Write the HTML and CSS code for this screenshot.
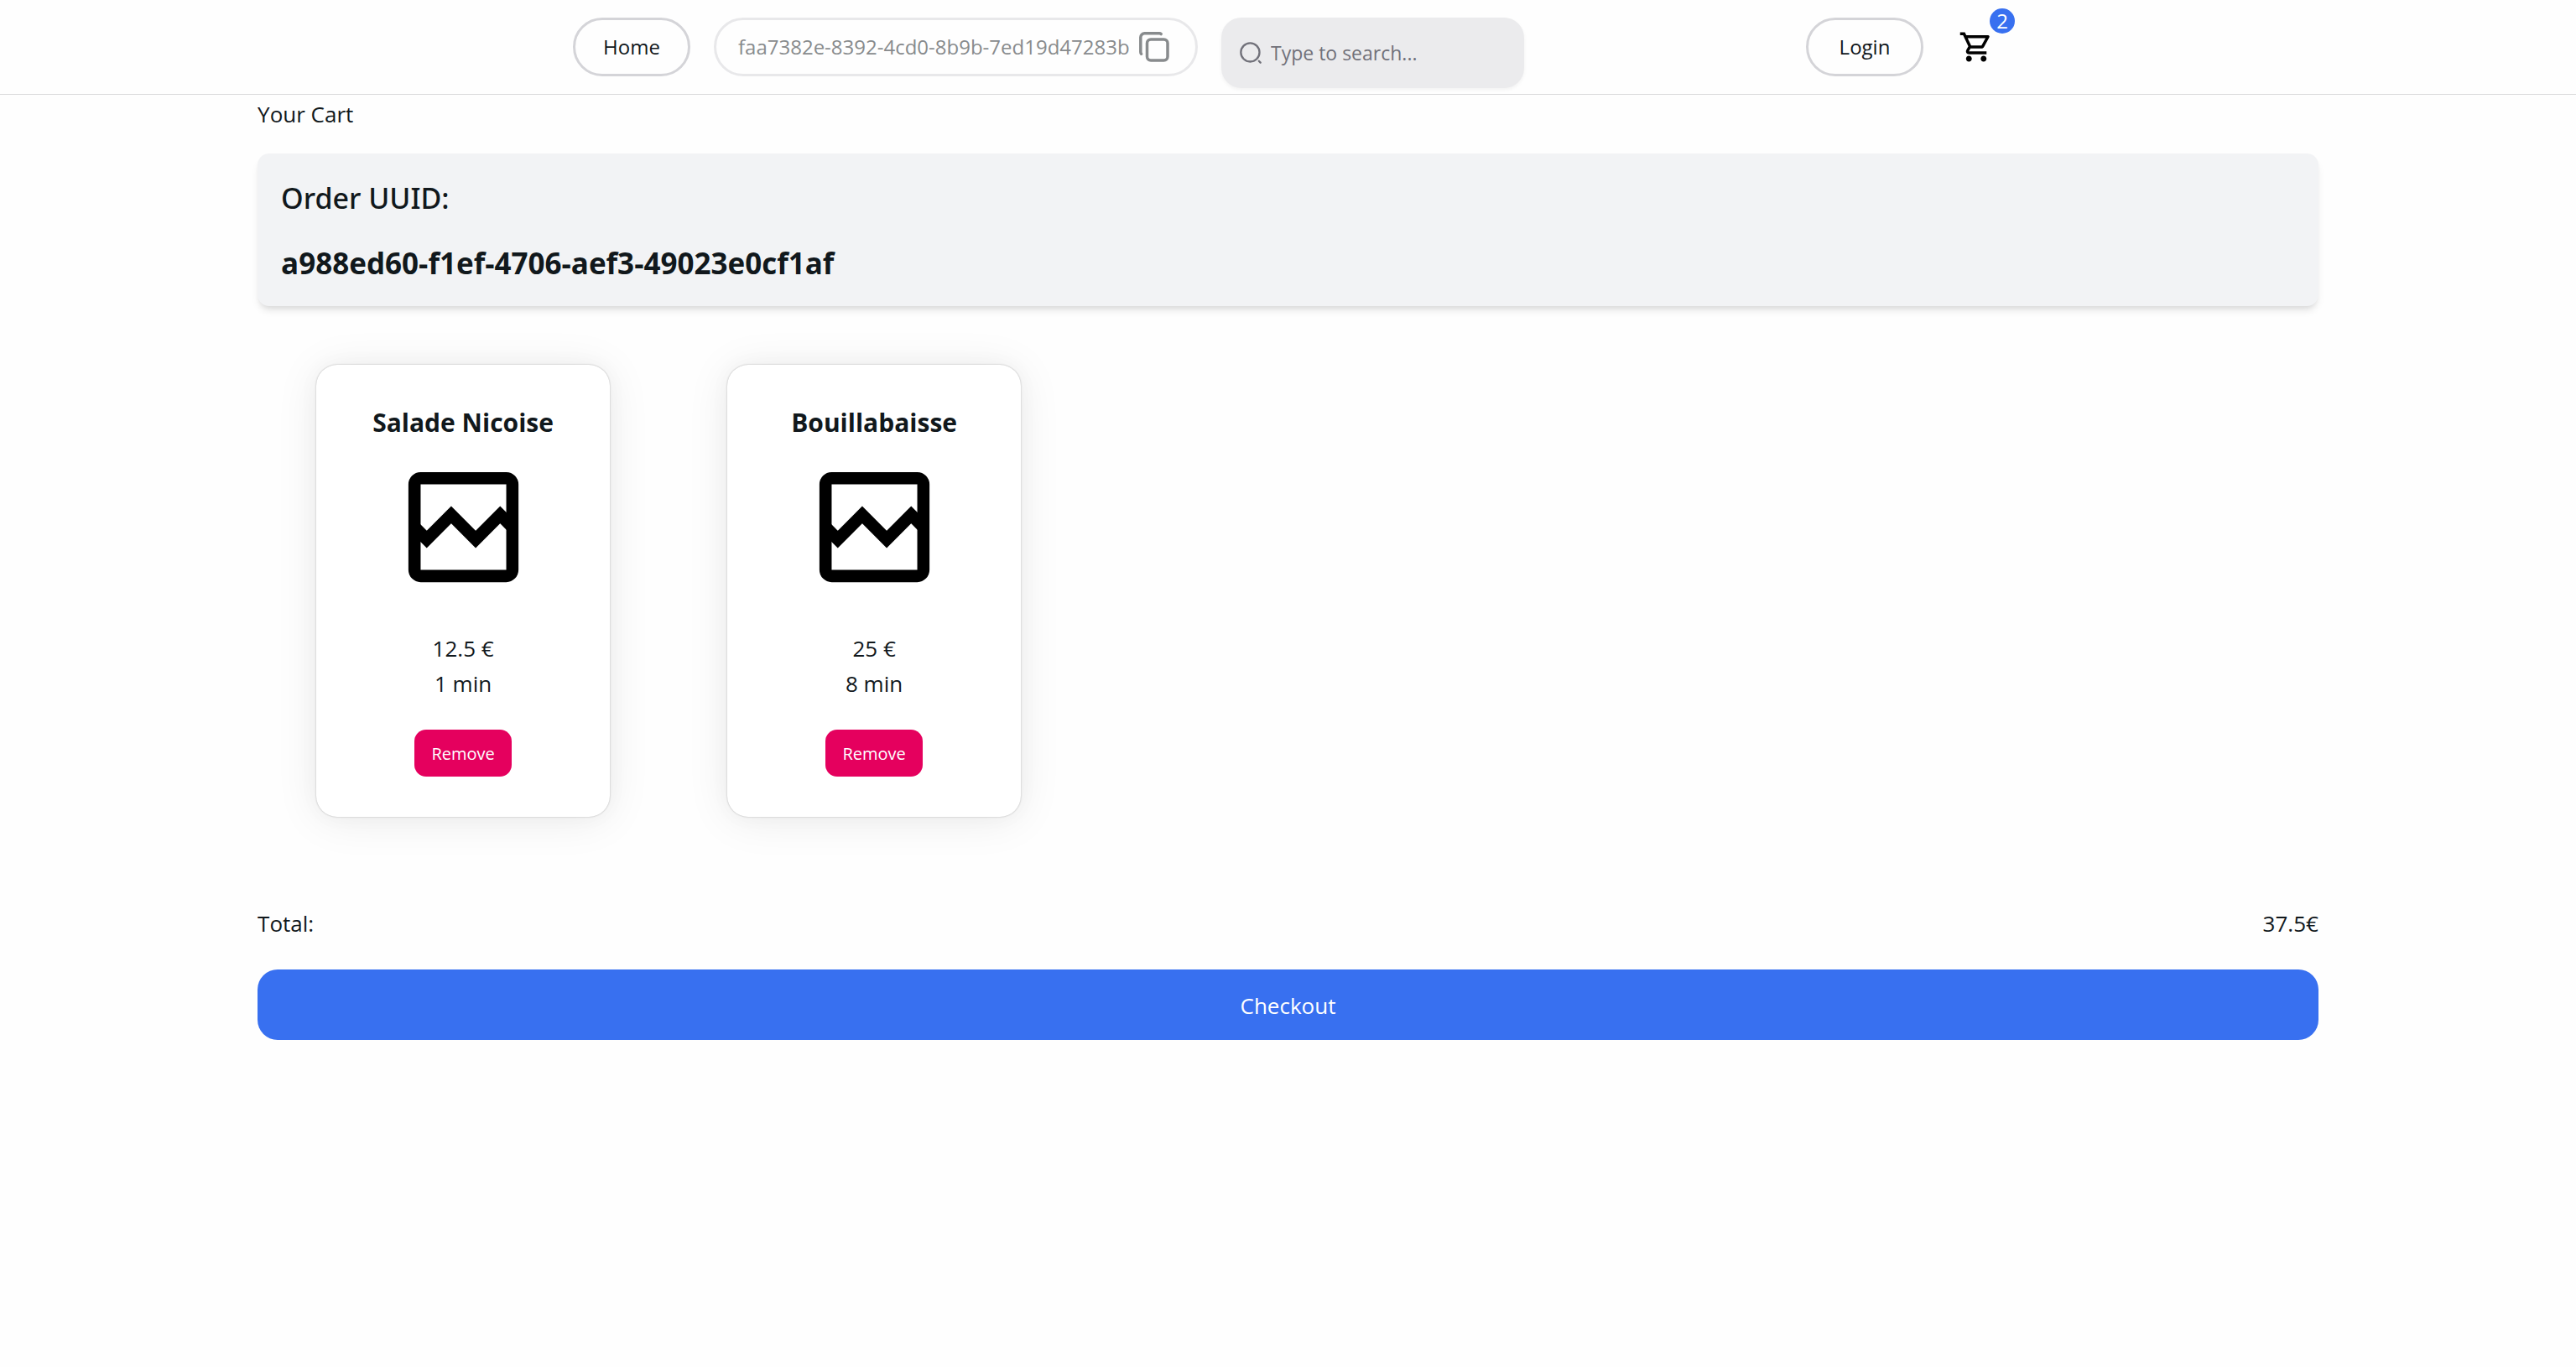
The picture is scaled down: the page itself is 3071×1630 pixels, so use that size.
FILE: index.html
```html
<!DOCTYPE html>
<html lang="en">
<head>
  <meta charset="utf-8">
  <meta name="viewport" content="width=device-width, initial-scale=1">
  <title>Your Cart</title>
  <link rel="stylesheet" href="styles.css">
</head>
<body>
  <header class="navbar">
    <nav class="navbar-inner" aria-label="Main">
      <a class="pill" href="#home">Home</a>
      <div class="snippet">
        <span>faa7382e-8392-4cd0-8b9b-7ed19d47283b</span>
        <button class="copy" type="button" aria-label="Copy">
          <svg class="icon" viewBox="0 0 42 42" fill="none" stroke="currentColor" stroke-width="3.5" stroke-linecap="round" aria-hidden="true">
            <rect x="12.5" y="12" width="24.5" height="25" rx="4.5"/>
            <path d="M5.6 29.2C5 28.6 4.8 27.8 4.8 27V9.5C4.8 6.9 6.9 4.8 9.5 4.8H27C27.9 4.8 28.6 5 29.2 5.6"/>
          </svg>
        </button>
      </div>
      <label class="search">
        <svg class="search-icon" viewBox="0 0 24 24" fill="none" stroke="currentColor" stroke-width="2" stroke-linecap="round" aria-hidden="true">
          <circle cx="11.5" cy="11.5" r="9.5"/>
          <path d="M22 22L20.4 20.4"/>
        </svg>
        <input class="search-input" type="search" placeholder="Type to search..." aria-label="Search">
      </label>
      <div class="account">
        <a class="pill" href="#login">Login</a>
        <button class="cart-button" type="button" aria-label="Cart, 2 items">
          <svg class="icon" viewBox="0 0 24 24" fill="currentColor" aria-hidden="true">
            <path d="M15.55 13c.75 0 1.41-.41 1.75-1.03l3.58-6.49c.37-.66-.11-1.48-.87-1.48H5.21l-.94-2H1v2h2l3.6 7.59-1.35 2.44C4.52 15.37 5.48 17 7 17h12v-2H7l1.1-2h7.45zM6.16 6h12.15l-2.76 5H8.53L6.16 6zM7 18c-1.1 0-1.99.9-1.99 2S5.9 22 7 22s2-.9 2-2-.9-2-2-2zm10 0c-1.1 0-1.99.9-1.99 2s.89 2 1.99 2 2-.9 2-2-.9-2-2-2z"/>
          </svg>
          <span class="badge">2</span>
        </button>
      </div>
    </nav>
  </header>

  <main class="page">
    <h1 class="page-title">Your Cart</h1>

    <section class="order">
      <h2 class="order-label">Order UUID:</h2>
      <p class="order-id">a988ed60-f1ef-4706-aef3-49023e0cf1af</p>
    </section>

    <section class="items">
      <article class="card">
        <h3 class="card-title">Salade Nicoise</h3>
        <svg class="card-image" viewBox="0 0 24 24" fill="none" stroke="currentColor" stroke-width="2" role="img" aria-label="No picture">
          <path fill="currentColor" stroke="none" fill-rule="evenodd" d="M5 3H19A2 2 0 0 1 21 5V19A2 2 0 0 1 19 21H5A2 2 0 0 1 3 19V5A2 2 0 0 1 5 3ZM5 5V19H19V5Z"/>
          <path d="M4 12L6 14L10 10L14 14L18 10L20 12"/>
        </svg>
        <p class="card-details">12.5 €<br>1 min</p>
        <button class="remove" type="button">Remove</button>
      </article>
      <article class="card">
        <h3 class="card-title">Bouillabaisse</h3>
        <svg class="card-image" viewBox="0 0 24 24" fill="none" stroke="currentColor" stroke-width="2" role="img" aria-label="No picture">
          <path fill="currentColor" stroke="none" fill-rule="evenodd" d="M5 3H19A2 2 0 0 1 21 5V19A2 2 0 0 1 19 21H5A2 2 0 0 1 3 19V5A2 2 0 0 1 5 3ZM5 5V19H19V5Z"/>
          <path d="M4 12L6 14L10 10L14 14L18 10L20 12"/>
        </svg>
        <p class="card-details">25 €<br>8 min</p>
        <button class="remove" type="button">Remove</button>
      </article>
    </section>

    <div class="total">
      <span>Total:</span>
      <span>37.5€</span>
    </div>
    <button class="checkout" type="button">Checkout</button>
  </main>
</body>
</html>
```
FILE: styles.css
```css
:root {
  --text: #11181c;
  --muted: #888b8d;
  --blue: #3870f0;
  --red: #e5005e;
}

* {
  box-sizing: border-box;
}

body {
  margin: 0;
  background: #fefefe;
  color: var(--text);
  font: 26px/42px "Open Sans", "Noto Sans", sans-serif;
}

h1, h2, h3, p {
  margin: 0;
}

button, input {
  font: inherit;
  color: inherit;
  border: 0;
  padding: 0;
  background: none;
}

button {
  cursor: pointer;
}

/* Navigation bar */

.navbar {
  padding: 21px 0;
  height: 113px;
  border-bottom: 1px solid #d9d9db;
}

.navbar-inner {
  display: flex;
  align-items: flex-start;
  gap: 28px;
  max-width: 1705px;
  margin: 0 auto;
  font-size: 24px;
}

.pill {
  display: flex;
  align-items: center;
  justify-content: center;
  min-width: 140px;
  height: 70px;
  border: 3px solid #d4d4d8;
  border-radius: 35px;
  color: var(--text);
  text-decoration: none;
}

.snippet {
  display: flex;
  align-items: center;
  justify-content: space-between;
  width: 577px;
  height: 70px;
  padding: 0 28px 0 26px;
  border: 3px solid #e8e8ea;
  border-radius: 35px;
  color: var(--muted);
}

.icon {
  display: block;
  width: 42px;
  height: 42px;
}

.search {
  display: flex;
  align-items: center;
  gap: 10px;
  width: 361px;
  height: 84px;
  padding: 0 21px;
  border-radius: 24px;
  background: #ebebed;
  box-shadow: 0 2px 4px rgba(0, 0, 0, 0.05);
  color: #71717a;
}

.search-icon {
  flex: none;
  width: 28px;
  height: 28px;
}

.search-input {
  flex: 1;
  min-width: 0;
  outline: 0;
  font-size: 23px;
}

.search-input::placeholder {
  color: #71717a;
  opacity: 1;
}

.account {
  display: flex;
  gap: 28px;
  margin-left: auto;
}

.cart-button {
  position: relative;
  height: 70px;
  padding: 0 11px 0 14px;
  color: #000;
}

.badge {
  position: absolute;
  top: -11px;
  left: 51px;
  width: 30px;
  height: 30px;
  border-radius: 15px;
  background: var(--blue);
  color: #fff;
  line-height: 30px;
  text-align: center;
}

/* Cart */

.page {
  display: flex;
  flex-direction: column;
  width: 80%;
  margin: 0 auto;
  padding-top: 2px;
}

.page-title {
  margin-bottom: 26px;
  font-size: 26px;
  font-weight: 400;
}

.order {
  display: grid;
  gap: 28px;
  padding: 29px 28px 27px;
  border-radius: 14px;
  background: #f2f3f5;
  box-shadow: 0 7px 10px -2px rgba(0, 0, 0, 0.1), 0 4px 7px -4px rgba(0, 0, 0, 0.1);
}

.order-label,
.order-id {
  font-size: 35px;
  line-height: 49px;
}

.order-label {
  font-family: "Noto Sans", "Open Sans", sans-serif;
  font-size: 34px;
  font-weight: 500;
}

.order-id {
  font-weight: 700;
}

.items {
  display: grid;
  grid-template-columns: repeat(auto-fill, 350px);
  gap: 140px;
  padding: 70px;
}

.card {
  display: flex;
  flex-direction: column;
  align-items: center;
  padding: 48px 21px;
  border-radius: 25px;
  background: #fff;
  box-shadow: 0 0 26px rgba(0, 0, 0, 0.03), 0 4px 52px rgba(0, 0, 0, 0.08), 0 0 2px rgba(0, 0, 0, 0.3);
  text-align: center;
}

.card-title {
  margin-bottom: 16px;
  font-size: 30px;
  font-weight: 700;
}

.card-image {
  width: 175px;
  height: 175px;
  color: #000;
}

.card-details {
  margin: 36px 0 34px;
}

.remove {
  height: 56px;
  padding: 1px 20px 0;
  border-radius: 14px;
  background: var(--red);
  color: #fff;
  font-size: 20px;
}

.total {
  display: flex;
  justify-content: space-between;
  margin: 36px 0 34px;
}

.checkout {
  height: 84px;
  padding-top: 2px;
  border-radius: 24px;
  background: var(--blue);
  color: #fff;
}
```
